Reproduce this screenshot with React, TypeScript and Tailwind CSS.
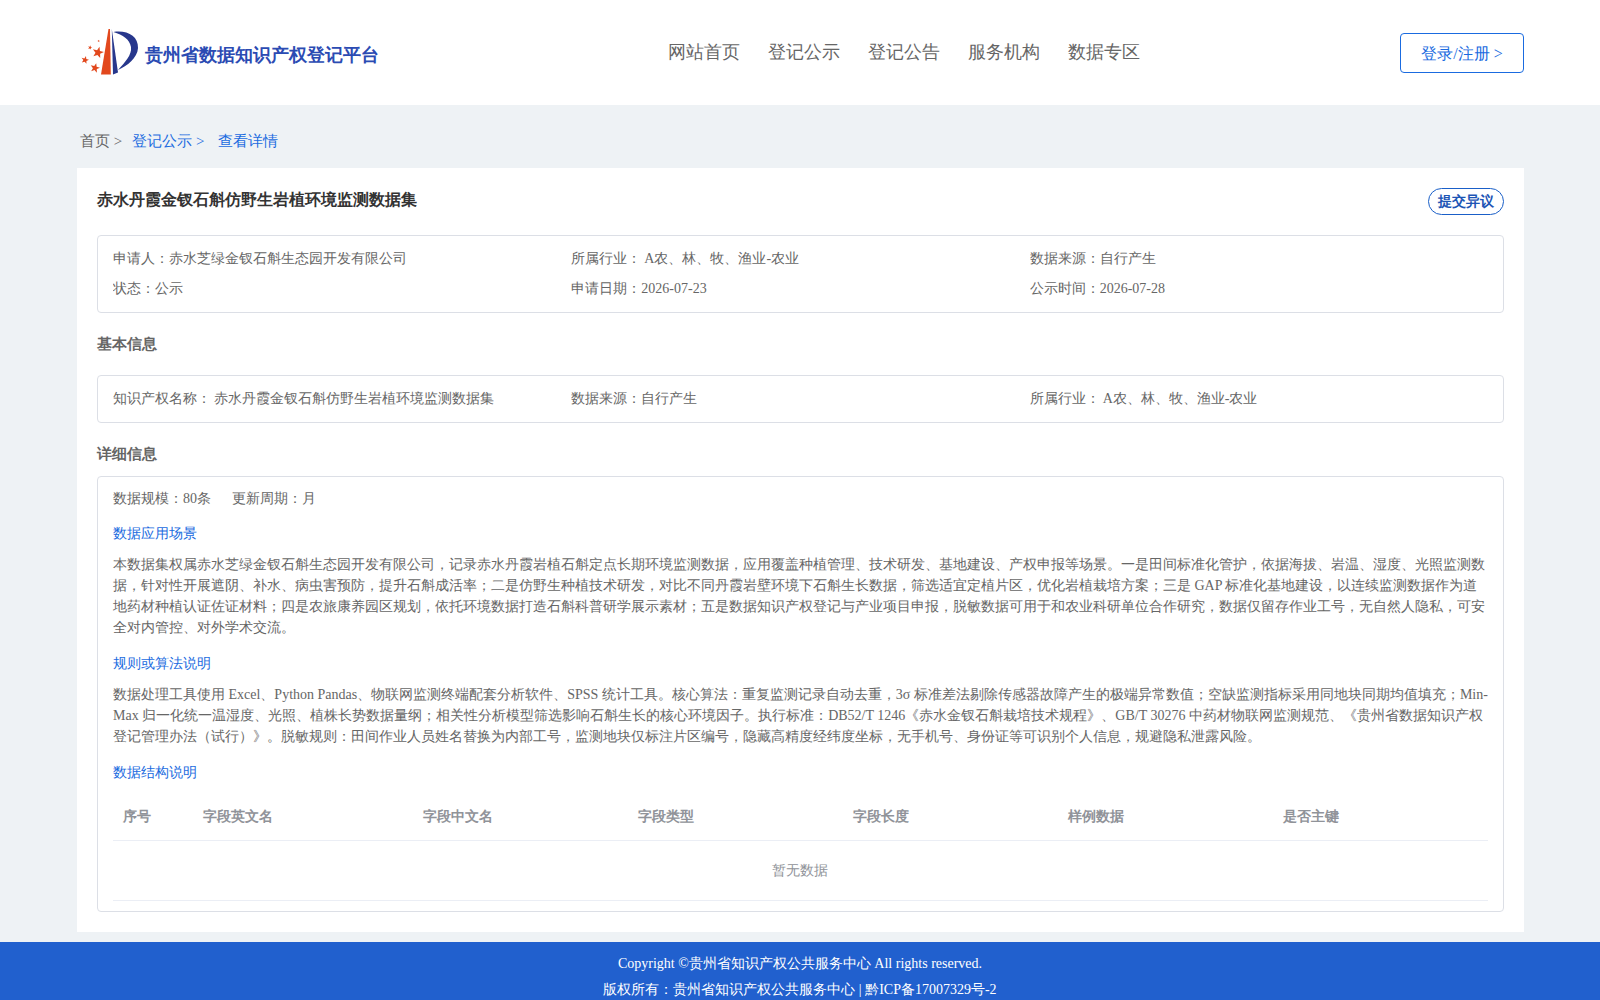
const detailInfo = {
  scene:
    '本数据集权属赤水芝绿金钗石斛生态园开发有限公司，记录赤水丹霞岩植石斛定点长期环境监测数据，应用覆盖种植管理、技术研发、基地建设、产权申报等场景。一是田间标准化管护，依据海拔、岩温、湿度、光照监测数据，针对性开展遮阴、补水、病虫害预防，提升石斛成活率；二是仿野生种植技术研发，对比不同丹霞岩壁环境下石斛生长数据，筛选适宜定植片区，优化岩植栽培方案；三是 GAP 标准化基地建设，以连续监测数据作为道地药材种植认证佐证材料；四是农旅康养园区规划，依托环境数据打造石斛科普研学展示素材；五是数据知识产权登记与产业项目申报，脱敏数据可用于和农业科研单位合作研究，数据仅留存作业工号，无自然人隐私，可安全对内管控、对外学术交流。',
  rule:
    '数据处理工具使用 Excel、Python Pandas、物联网监测终端配套分析软件、SPSS 统计工具。核心算法：重复监测记录自动去重，3σ 标准差法剔除传感器故障产生的极端异常数值；空缺监测指标采用同地块同期均值填充；Min-Max 归一化统一温湿度、光照、植株长势数据量纲；相关性分析模型筛选影响石斛生长的核心环境因子。执行标准：DB52/T 1246《赤水金钗石斛栽培技术规程》、GB/T 30276 中药材物联网监测规范、《贵州省数据知识产权登记管理办法（试行）》。脱敏规则：田间作业人员姓名替换为内部工号，监测地块仅标注片区编号，隐藏高精度经纬度坐标，无手机号、身份证等可识别个人信息，规避隐私泄露风险。',
};

const navItems = ['网站首页', '登记公示', '登记公告', '服务机构', '数据专区'];

const columns = [
  { title: '序号', width: 'w-[80px]' },
  { title: '字段英文名', width: 'w-[220px]' },
  { title: '字段中文名', width: 'w-[215px]' },
  { title: '字段类型', width: 'w-[215px]' },
  { title: '字段长度', width: 'w-[215px]' },
  { title: '样例数据', width: 'w-[215px]' },
  { title: '是否主键', width: 'flex-1' },
];

function Star({ x, y, r }: { x: number; y: number; r: number }) {
  const pts = [];
  for (let i = 0; i < 10; i++) {
    const a = -Math.PI / 2 + (i * Math.PI) / 5 + 0.25;
    const rad = i % 2 === 0 ? r : r * 0.42;
    pts.push(`${(x + rad * Math.cos(a)).toFixed(2)},${(y + rad * Math.sin(a)).toFixed(2)}`);
  }
  return <polygon points={pts.join(' ')} fill="#e2481d" />;
}

// 坐标取自 66x56 的原图裁剪
function Logo() {
  return (
    <svg width="66" height="56" viewBox="0 0 66 56" className="shrink-0">
      <path d="M24 50.5 L31.5 5 L33 5 L33.8 50.5 Z" fill="#e2481d" />
      <path d="M34.8 5 L41 48.5 L36 50.5 Z" fill="#27378c" />
      <path d="M36.5 8 C50 6 61.5 12 61 24 C60.5 34 50 42 41 46 C48 38 55 31 54 23 C52.5 15 46 11 36.5 8 Z" fill="#27378c" />
      <Star x={21} y={28.5} r={6} />
      <Star x={8} y={36} r={4} />
      <Star x={18} y={44} r={5} />
      <Star x={13} y={23.5} r={2.2} />
      <Star x={21.7} y={17} r={1.3} />
    </svg>
  );
}

function InfoCol({ children }: { children: React.ReactNode }) {
  return <div className="h-[30px] leading-[30px] truncate">{children}</div>;
}

export default function App() {
  return (
    <div className="min-h-[1000px] bg-[#eef2f5] text-[14px] text-[#666] font-['Liberation_Serif',serif]">
      {/* 顶部导航 */}
      <header className="h-[105px] bg-white">
        <div className="ml-[77px] w-[1447px] flex items-start">
          <div className="flex items-center pt-[24px] w-[591px]">
            <Logo />
            <span className="text-[18px] font-bold text-[#2b4bb3] mt-[6px] ml-[2px]">贵州省数据知识产权登记平台</span>
          </div>
          <nav className="flex gap-[28px] pt-[39px] text-[18px] leading-[27px] text-[#666]">
            {navItems.map((item) => (
              <a key={item}>{item}</a>
            ))}
          </nav>
          <button className="ml-auto mt-[33px] w-[124px] h-[40px] pt-[2px] border border-[#1a6be0] rounded-[4px] text-[16px] text-[#1a6be0]">
            登录/注册 &gt;
          </button>
        </div>
      </header>

      {/* 面包屑 */}
      <div className="ml-[77px] w-[1447px] h-[63px] flex items-center pl-[3px] pt-[10px] text-[15px]">
        <span className="text-[#666]">首页 &gt;</span>
        <span className="ml-[10px] text-[#1a6be0]">登记公示 &gt;</span>
        <span className="ml-[14px] text-[#1a6be0]">查看详情</span>
      </div>

      <main className="ml-[77px] w-[1447px] bg-white px-[20px] pt-[20px] pb-[20px]">
        <div className="flex justify-between h-[47px]">
          <h1 className="text-[16px] font-bold text-[#333] leading-[24px]">赤水丹霞金钗石斛仿野生岩植环境监测数据集</h1>
          <button className="w-[76px] h-[27px] border border-[#1a5fc8] rounded-[14px] text-[14px] font-bold text-[#1d55b5]">
            提交异议
          </button>
        </div>

        <div className="border border-[#dcdfe6] rounded-[4px] px-[15px] py-[8px] grid grid-cols-3">
          <InfoCol>申请人：赤水芝绿金钗石斛生态园开发有限公司</InfoCol>
          <InfoCol>
            所属行业：<span className="ml-[3px]">A农、林、牧、渔业-农业</span>
          </InfoCol>
          <InfoCol>数据来源：自行产生</InfoCol>
          <InfoCol>状态：公示</InfoCol>
          <InfoCol>申请日期：2026-07-23</InfoCol>
          <InfoCol>公示时间：2026-07-28</InfoCol>
        </div>

        <h2 className="mt-[19px] mb-[19px] text-[15px] font-bold leading-[24px] text-[#666]">基本信息</h2>
        <div className="border border-[#dcdfe6] rounded-[4px] px-[15px] py-[8px] grid grid-cols-3">
          <InfoCol>
            知识产权名称：<span className="ml-[3px]">赤水丹霞金钗石斛仿野生岩植环境监测数据集</span>
          </InfoCol>
          <InfoCol>数据来源：自行产生</InfoCol>
          <InfoCol>
            所属行业：<span className="ml-[3px]">A农、林、牧、渔业-农业</span>
          </InfoCol>
        </div>

        <h2 className="mt-[19px] mb-[10px] text-[15px] font-bold leading-[24px] text-[#666]">详细信息</h2>
        <div className="border border-[#dcdfe6] rounded-[4px] px-[15px] pb-[10px]">
          <div className="h-[43px] pt-[9px] leading-[26px] flex gap-[21px]">
            <span>数据规模：80条</span>
            <span>更新周期：月</span>
          </div>
          <div className="text-[#1a6be0] leading-[28px]">数据应用场景</div>
          <p className="mt-[6px] leading-[21px]">{detailInfo.scene}</p>
          <div className="text-[#1a6be0] leading-[28px] mt-[12px]">规则或算法说明</div>
          <p className="mt-[6px] leading-[21px]">{detailInfo.rule}</p>
          <div className="text-[#1a6be0] leading-[28px] mt-[12px]">数据结构说明</div>

          <div className="mt-[8px]">
            <div className="flex h-[46px] pb-[2px] items-center border-b border-[#ebeef5] font-bold text-[#909399]">
              {columns.map((col) => (
                <div key={col.title} className={`${col.width} px-[10px]`}>
                  {col.title}
                </div>
              ))}
            </div>
            <div className="h-[60px] pr-[2px] flex items-center justify-center border-b border-[#ebeef5] text-[#909399]">暂无数据</div>
          </div>
        </div>
      </main>

      <footer className="mt-[10px] h-[58px] bg-[#2160ce] text-white text-center leading-[25px] pt-[9px] overflow-hidden">
        <div>Copyright ©贵州省知识产权公共服务中心 All rights reserved.</div>
        <div className="mt-[1px]">版权所有：贵州省知识产权公共服务中心 | 黔ICP备17007329号-2</div>
      </footer>
    </div>
  );
}
